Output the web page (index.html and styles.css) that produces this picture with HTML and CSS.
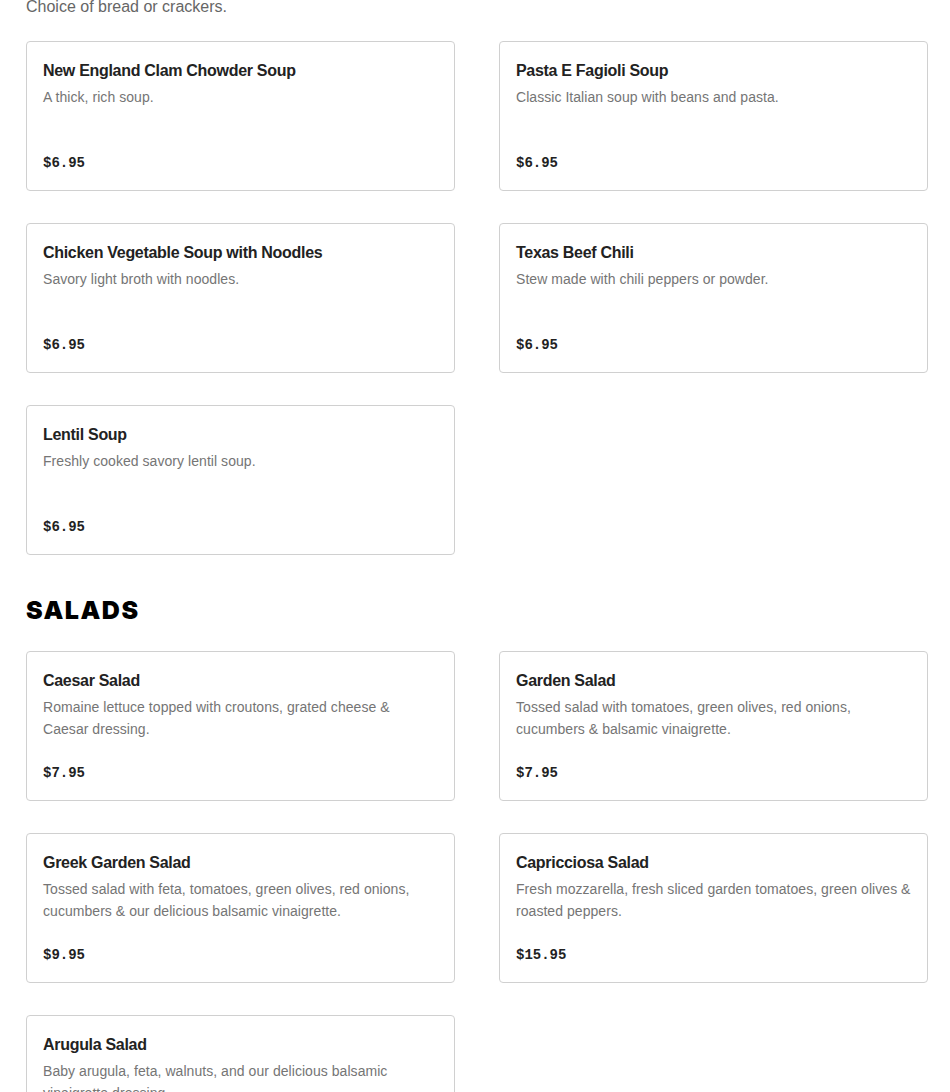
FILE: index.html
```html
<!DOCTYPE html>
<html lang="en">
<head>
    <meta charset="UTF-8">
    <meta name="viewport" content="width=device-width, initial-scale=1.0">
    <title>Menu - Soups & Salads</title>
    <link rel="stylesheet" href="styles.css">
</head>
<body>
    <div class="menu">
        <!-- Soups -->
        <p class="section-note">Choice of bread or crackers.</p>
        <div class="item-grid">
            <div class="item-card">
                <h3 class="item-name">New England Clam Chowder Soup</h3>
                <p class="item-desc">A thick, rich soup.</p>
                <span class="item-price">$6.95</span>
            </div>
            <div class="item-card">
                <h3 class="item-name">Pasta E Fagioli Soup</h3>
                <p class="item-desc">Classic Italian soup with beans and pasta.</p>
                <span class="item-price">$6.95</span>
            </div>
            <div class="item-card">
                <h3 class="item-name">Chicken Vegetable Soup with Noodles</h3>
                <p class="item-desc">Savory light broth with noodles.</p>
                <span class="item-price">$6.95</span>
            </div>
            <div class="item-card">
                <h3 class="item-name">Texas Beef Chili</h3>
                <p class="item-desc">Stew made with chili peppers or powder.</p>
                <span class="item-price">$6.95</span>
            </div>
            <div class="item-card">
                <h3 class="item-name">Lentil Soup</h3>
                <p class="item-desc">Freshly cooked savory lentil soup.</p>
                <span class="item-price">$6.95</span>
            </div>
        </div>

        <!-- Salads -->
        <h2 class="section-title">SALADS</h2>
        <div class="item-grid">
            <div class="item-card">
                <h3 class="item-name">Caesar Salad</h3>
                <p class="item-desc">Romaine lettuce topped with croutons, grated cheese &amp; Caesar&nbsp;dressing.</p>
                <span class="item-price">$7.95</span>
            </div>
            <div class="item-card">
                <h3 class="item-name">Garden Salad</h3>
                <p class="item-desc">Tossed salad with tomatoes, green olives, red onions, cucumbers &amp; balsamic vinaigrette.</p>
                <span class="item-price">$7.95</span>
            </div>
            <div class="item-card">
                <h3 class="item-name">Greek Garden Salad</h3>
                <p class="item-desc">Tossed salad with feta, tomatoes, green olives, red onions, cucumbers &amp; our delicious balsamic vinaigrette.</p>
                <span class="item-price">$9.95</span>
            </div>
            <div class="item-card">
                <h3 class="item-name">Capricciosa Salad</h3>
                <p class="item-desc">Fresh mozzarella, fresh sliced garden tomatoes, green olives &amp; roasted peppers.</p>
                <span class="item-price">$15.95</span>
            </div>
            <div class="item-card">
                <h3 class="item-name">Arugula Salad</h3>
                <p class="item-desc">Baby arugula, feta, walnuts, and our delicious balsamic vinaigrette dressing.</p>
                <span class="item-price">$9.95</span>
            </div>
        </div>
    </div>
</body>
</html>
```

FILE: styles.css
```css
* {
    margin: 0;
    padding: 0;
    box-sizing: border-box;
}

body {
    font-family: "Liberation Sans", Arial, sans-serif;
    background-color: #fff;
    color: #222;
}

.menu {
    padding: 0 22px 40px 26px;
}

.section-note {
    margin-top: -5px;
    margin-bottom: 22px;
    font-size: 16px;
    line-height: 24px;
    color: #666;
}

/* Section heading */
.section-title {
    margin: 39px 0 25px;
    font-family: Inter, "Liberation Sans", sans-serif;
    font-size: 25px;
    font-weight: 900;
    line-height: 32px;
    letter-spacing: 1.5px;
    color: #000;
}

.item-grid {
    display: grid;
    grid-template-columns: 1fr 1fr;
    column-gap: 44px;
    row-gap: 32px;
}

.item-card {
    display: flex;
    flex-direction: column;
    height: 150px;
    padding: 17px 12px 15px 16px;
    border: 1px solid #d0d0d0;
    border-radius: 4px;
    background-color: #fff;
}

.item-name {
    font-size: 16px;
    font-weight: bold;
    line-height: 24px;
    letter-spacing: -0.3px;
    color: #222;
}

.item-desc {
    margin-top: 3px;
    min-height: 44px;
    font-size: 14px;
    line-height: 22px;
    letter-spacing: 0.05px;
    color: #757575;
}

.item-price {
    margin-top: auto;
    font-family: "Liberation Mono", "Courier New", monospace;
    font-size: 14px;
    font-weight: bold;
    line-height: 24px;
    color: #222;
}
```
